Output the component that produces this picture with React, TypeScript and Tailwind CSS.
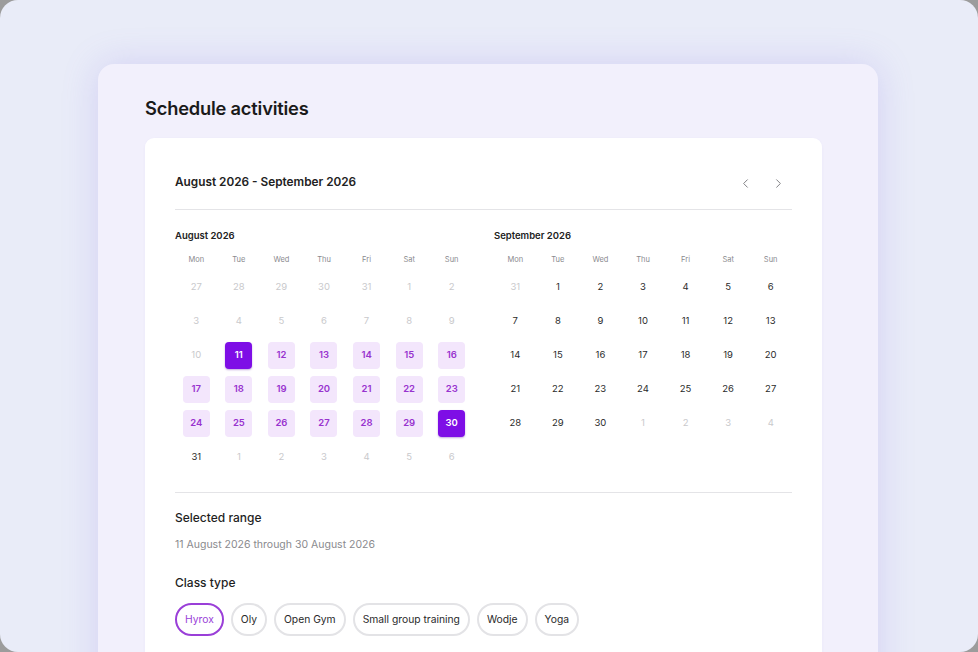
import React from 'react';
import { ChevronLeft, ChevronRight } from 'lucide-react';

type Day = { n: number; muted?: boolean; kind?: 'start' | 'end' | 'range' };

const WEEKDAYS = ['Mon', 'Tue', 'Wed', 'Thu', 'Fri', 'Sat', 'Sun'];

const august: Day[] = [
    ...[27, 28, 29, 30, 31].map((n) => ({ n, muted: true })),
    ...Array.from({ length: 10 }, (_, i) => ({ n: i + 1, muted: true })),
    ...Array.from({ length: 20 }, (_, i) => {
        const n = i + 11;
        const kind: Day['kind'] = n === 11 ? 'start' : n === 30 ? 'end' : 'range';
        return { n, kind };
    }),
    { n: 31 },
    ...[1, 2, 3, 4, 5, 6].map((n) => ({ n, muted: true })),
];

const september: Day[] = [
    { n: 31, muted: true },
    ...Array.from({ length: 30 }, (_, i) => ({ n: i + 1 })),
    ...[1, 2, 3, 4].map((n) => ({ n, muted: true })),
];

const CLASS_TYPES = ['Hyrox', 'Oly', 'Open Gym', 'Small group training', 'Wodje', 'Yoga'];

const DayCell: React.FC<{ day: Day }> = ({ day }) => {
    let inner = 'text-[#2b2b2b]';
    if (day.muted) inner = 'text-[#c9c9cc]';
    if (day.kind === 'range') inner = 'bg-[#f3e6fc] text-[#9833cf] font-semibold';
    if (day.kind === 'start' || day.kind === 'end')
        inner = 'bg-[#7e0ee6] text-white font-semibold shadow-[0_1px_2px_rgba(80,0,160,0.35)]';

    return (
        <div className="h-[34px] flex items-center justify-center">
            <div className={`w-[27px] h-[27px] rounded-[4px] flex items-center justify-center text-[9.5px] ${inner}`}>
                {day.n}
            </div>
        </div>
    );
};

const Month: React.FC<{ title: string; days: Day[] }> = ({ title, days }) => (
    <div className="flex-1">
        <div className="text-[9.5px] font-semibold text-[#222] leading-[14px]">{title}</div>
        <div className="grid grid-cols-7 mt-[11px]">
            {WEEKDAYS.map((w) => (
                <div key={w} className="h-[12px] flex items-center justify-center text-[7.5px] text-[#8a8a8e]">
                    {w}
                </div>
            ))}
        </div>
        <div className="grid grid-cols-7 mt-[4px]">
            {days.map((d, i) => (
                <DayCell key={i} day={d} />
            ))}
        </div>
    </div>
);

export default function App() {
    return (
        <div className="bg-[#9c9c9c] w-[978px] h-[652px]" style={{ fontFamily: 'Inter, "Noto Sans", sans-serif' }}>
            <div className="w-full h-full rounded-[18px] bg-[#e9ecf8] overflow-hidden pt-[64px] pl-[98px]">
                <div className="w-[780px] bg-[#f2f0fc] rounded-[16px] shadow-[0_0_36px_rgba(130,110,230,0.22)] pl-[47px] pt-[30px] pb-[80px]">
                    <h1 className="text-[18.3px] font-semibold text-[#1a1a1a] leading-[28px] tracking-[-0.2px]">
                        Schedule activities
                    </h1>
                    <div className="w-[677px] mt-[16px] bg-white rounded-[9px] px-[30px] pt-[31px] pb-[40px] shadow-[0_1px_3px_rgba(120,100,200,0.06)]">
                        <div className="flex items-center justify-between h-[28px]">
                            <div className="text-[11.8px] font-semibold text-[#222]">August 2026 - September 2026</div>
                            <div className="flex items-center gap-[5px]">
                                <button className="w-7 h-7 flex items-center justify-center text-[#7a7a7e]">
                                    <ChevronLeft size={15} strokeWidth={1.5} />
                                </button>
                                <button className="w-7 h-7 flex items-center justify-center text-[#7a7a7e]">
                                    <ChevronRight size={15} strokeWidth={1.5} />
                                </button>
                            </div>
                        </div>
                        <div className="mt-[12px] h-px bg-[#e4e4e7]" />
                        <div className="flex gap-[21px] mt-[19px]">
                            <Month title="August 2026" days={august} />
                            <Month title="September 2026" days={september} />
                        </div>
                        <div className="mt-[18px] h-px bg-[#e4e4e7]" />
                        <div className="mt-[16px] text-[12px] font-medium text-[#1f1f1f] leading-[18px]">Selected range</div>
                        <div className="mt-[10px] text-[10.5px] text-[#8a8a8e] leading-[16px]">
                            11 August 2026 through 30 August 2026
                        </div>
                        <div className="mt-[21px] text-[12px] font-medium text-[#1f1f1f] leading-[18px]">Class type</div>
                        <div className="mt-[11px] flex gap-[7px]">
                            {CLASS_TYPES.map((c) => (
                                <div
                                    key={c}
                                    className={`h-[33px] px-[8px] rounded-full border-2 flex items-center text-[10.3px] ${
                                        c === 'Hyrox'
                                            ? 'border-[#9a3fd8] text-[#9a3fd8]'
                                            : 'border-[#e3e3e6] text-[#2a2a2a]'
                                    }`}
                                >
                                    {c}
                                </div>
                            ))}
                        </div>
                    </div>
                </div>
            </div>
        </div>
    );
}
